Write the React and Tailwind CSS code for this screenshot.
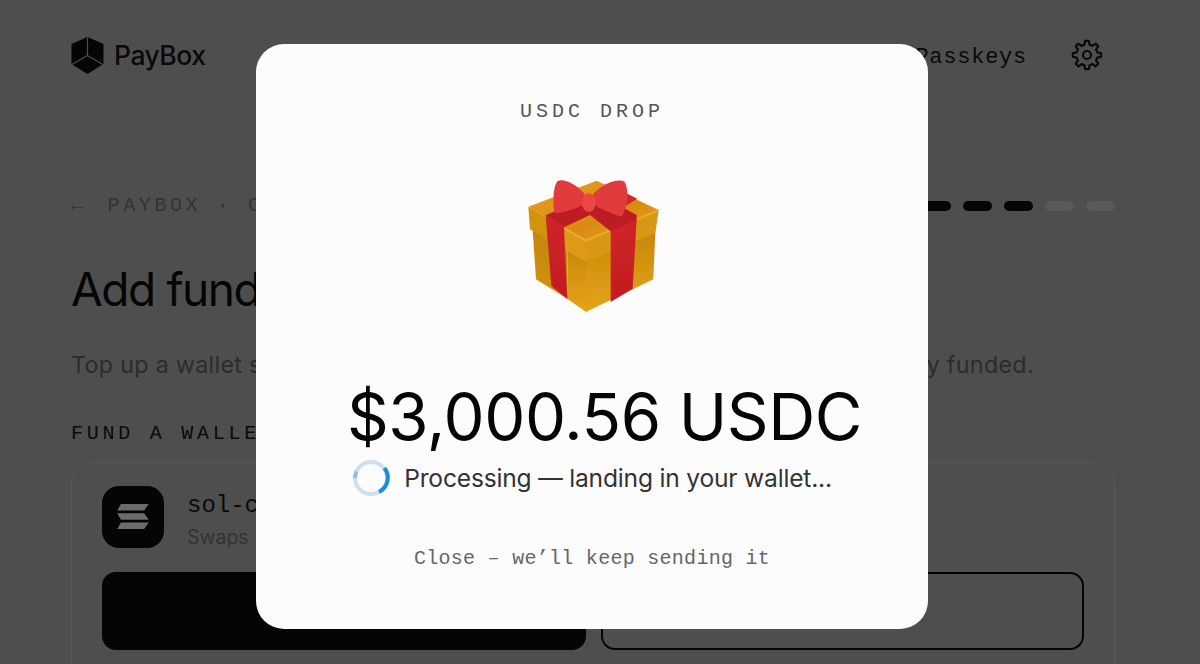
import React from "react";

const sans = "font-['Inter','Liberation_Sans',sans-serif]";
const mono = "font-['Liberation_Mono','DejaVu_Sans_Mono',monospace]";

function Logo() {
  return (
    <svg width="33" height="37" viewBox="0 0 33 37" className="shrink-0">
      <path d="M16.5 0 L32.5 7 L32.5 27 L16.5 37 L0.5 27 L0.5 7 Z" fill="#050505" />
      <path d="M16.5 0.5 L16.5 18.5 M16.5 18.5 L1 27.5 M16.5 18.5 L32 27.5" stroke="#4e4e4e" strokeWidth="1.2" fill="none" />
    </svg>
  );
}

function gearPath() {
  const cx = 16, cy = 16, outer = 14.2, inner = 10.6, n = 8;
  const step = (Math.PI * 2) / n;
  let d = "";
  for (let i = 0; i < n; i++) {
    const a = i * step - Math.PI / 2;
    const pt = (r, t) => `${(cx + r * Math.cos(t)).toFixed(2)} ${(cy + r * Math.sin(t)).toFixed(2)}`;
    const w = step * 0.17, v = step * 0.3;
    d += `${i === 0 ? "M" : "L"} ${pt(inner, a - v)} `;
    d += `L ${pt(outer, a - w)} A ${outer} ${outer} 0 0 1 ${pt(outer, a + w)} L ${pt(inner, a + v)} `;
    d += `A ${inner} ${inner} 0 0 1 ${pt(inner, a + step - v)} `;
  }
  return d + "Z";
}

function Gear() {
  return (
    <svg width="32" height="32" viewBox="0 0 32 32" fill="none" stroke="#0a0a0a" strokeWidth="2.2" strokeLinecap="round" strokeLinejoin="round">
      <path d={gearPath()} />
      <circle cx="16" cy="16" r="4" />
    </svg>
  );
}

function Solana() {
  return (
    <svg width="32" height="26" viewBox="0 0 34 28" fill="#6b6b6b">
      <path d="M4 0 H34 L29 7 H0 Z" />
      <path d="M0 10 H29 L34 17 H4 Z" />
      <path d="M4 20 H34 L29 27 H0 Z" />
    </svg>
  );
}

function Gift() {
  return (
    <svg width="220" height="190" viewBox="0 0 660 570" className="-ml-[4px] shrink-0">
      <defs>
        <linearGradient id="lidTop" x1="0" y1="0" x2="1" y2="1">
          <stop offset="0" stopColor="#e5a324" />
          <stop offset="0.6" stopColor="#d98a14" />
          <stop offset="1" stopColor="#eda71f" />
        </linearGradient>
        <linearGradient id="frontFace" x1="0" y1="0" x2="0" y2="1">
          <stop offset="0" stopColor="#c6860e" />
          <stop offset="0.35" stopColor="#d3920f" />
          <stop offset="1" stopColor="#e5a31a" />
        </linearGradient>
        <linearGradient id="sideFace" x1="0" y1="0" x2="0" y2="1">
          <stop offset="0" stopColor="#c4860e" />
          <stop offset="1" stopColor="#d2930f" />
        </linearGradient>
        <linearGradient id="ribbon" x1="0" y1="0" x2="0" y2="1">
          <stop offset="0" stopColor="#cf2228" />
          <stop offset="1" stopColor="#c21e22" />
        </linearGradient>
        <filter id="soft"><feGaussianBlur stdDeviation="1.8" /></filter>
      </defs>
      <g filter="url(#soft)">
        <path d="M158 240 L262 300 L264 448 L168 388 Z" fill="url(#sideFace)" />
        <path d="M262 296 L318 330 L318 486 L264 448 Z" fill="url(#frontFace)" />
        <path d="M318 330 L526 245 L520 388 L318 486 Z" fill="url(#frontFace)" />
        <path d="M145 170 L350 92 L536 180 L318 270 Z" fill="url(#lidTop)" />
        <path d="M145 170 L252 232 L252 298 L150 238 Z" fill="#d39411" />
        <path d="M252 232 L318 270 L318 335 L252 298 Z" fill="#dd9a16" />
        <path d="M318 270 L536 180 L526 250 L318 335 Z" fill="#d99716" />
        <path d="M252 232 L318 268 L536 178 L536 184 L318 275 L252 238 Z" fill="#e8ab2c" />
        <path d="M197 196 L252 232 L262 447 L214 408 Z" fill="url(#ribbon)" />
        <path d="M392 242 L470 208 L458 416 L392 456 Z" fill="url(#ribbon)" />
        <path d="M197 196 L350 130 L470 195 L470 210 L392 244 L330 195 L252 232 Z" fill="#bd1e20" />
        <path d="M436 128 L472 146 L440 166 L410 150 Z" fill="#cf2829" />
        <path d="M312 130 C285 100 248 84 232 94 C218 112 218 165 224 190 C262 186 302 172 318 158 Z" fill="#e23a3c" />
        <path d="M342 130 C365 104 412 82 434 96 C448 120 444 172 424 200 C394 190 354 174 334 158 Z" fill="#e23a3c" />
        <ellipse cx="326" cy="158" rx="21" ry="28" fill="#ea4645" />
      </g>
    </svg>
  );
}

function Spinner() {
  return (
    <svg width="38" height="38" viewBox="0 0 38 38" fill="none" className="shrink-0">
      <circle cx="19" cy="19" r="16" stroke="#cfdfee" strokeWidth="4" />
      <path d="M3 19 A16 16 0 0 1 4.5 12.5" stroke="#8fbde6" strokeWidth="4" />
      <path d="M32.5 9 A16 16 0 0 1 27 33" stroke="#1c8dd9" strokeWidth="4" />
    </svg>
  );
}

function Pill({ on }) {
  return <div className={`h-[10px] w-[29px] rounded-full ${on ? "bg-[#050505]" : "bg-[#595959]"}`} />;
}

export default function App() {
  return (
    <div className={`relative h-[664px] w-[1200px] overflow-hidden bg-[#4e4e4e] ${sans}`}>
      <div className="pt-[36px]">
        <div className="flex h-[38px] items-center justify-between pl-[71px] pr-[97px]">
          <div className="flex items-center gap-[10px]">
            <Logo />
            <span className="text-[26.5px] font-medium leading-[38px] tracking-[-0.5px] text-[#0a0a0a]">PayBox</span>
          </div>
          <div className="flex items-center gap-[44px]">
            <span className={`${mono} mt-[6px] text-[22px] leading-[38px] tracking-[0.75px] text-[#0a0a0a]`}>Passkeys</span>
            <Gear />
          </div>
        </div>
      </div>

      <div className="flex items-center justify-between pl-[71px] pr-[85px] pt-[120px]">
        <span className={`${mono} flex text-[20px] leading-[24px] tracking-[3.6px] text-[#333333]`}>
          <span className="mr-[21px]">←</span>
          <span>PAYBOX · CHECKOUT</span>
        </span>
        <div className="flex gap-[12px]">
          <Pill on /><Pill on /><Pill on /><Pill on /><Pill /><Pill />
        </div>
      </div>

      <h1 className="pl-[71px] pt-[42px] text-[46px] font-normal leading-[58px] tracking-[-1.4px] text-[#050505]">Add funds</h1>

      <p className="whitespace-nowrap pl-[71px] pt-[29px] text-[23.3px] leading-[36px] tracking-[0.29px] text-[#2c2c2c]">
        Top up a wallet so your AI agents can keep paying for compute and stay fully funded.
      </p>

      <div className={`${mono} pl-[71px] pt-[38px] text-[20px] leading-[26px] tracking-[3.75px] text-[#0a0a0a]`}>FUND A WALLET</div>

      <div className="ml-[71px] mr-[85px] mt-[15px] h-[300px] rounded-[24px] border border-[#575757] px-[30px] pt-[20px]">
        <div className="flex items-center gap-[23px]">
          <div className="flex h-[62px] w-[62px] items-center justify-center rounded-[17px] bg-[#050505]">
            <Solana />
          </div>
          <div className="flex flex-col pt-[7px]">
            <span className={`${mono} text-[24px] leading-[32px] text-[#0a0a0a]`}>sol-checkout</span>
            <span className="pt-[1px] text-[19.5px] leading-[28px] text-[#333333]">Swaps</span>
          </div>
        </div>
        <div className="mt-[21px] grid grid-cols-2 gap-[15px]">
          <div className="h-[78px] rounded-[14px] bg-[#050505]" />
          <div className="h-[78px] rounded-[14px] border-2 border-[#050505]" />
        </div>
      </div>

      <div className="absolute left-[256px] top-[44px] flex h-[585px] w-[672px] flex-col items-center rounded-[28px] bg-[#fcfcfc]">
        <div className={`${mono} pt-[55px] text-[20px] leading-[26px] tracking-[4px] text-[#555555]`}>USDC DROP</div>
        <div className="mt-[25px]"><Gift /></div>
        <div className="ml-[25px] mt-[45px] text-[65.2px] font-normal leading-[64px] tracking-[-0.4px] text-[#050505]">$3,000.56 USDC</div>
        <div className="mt-[10px] flex items-center gap-[14px]">
          <Spinner />
          <span className="text-[24.6px] leading-[36px] tracking-[-0.2px] text-[#333333]">Processing — landing in your wallet...</span>
        </div>
        <div className={`${mono} mt-[48px] text-[20px] leading-[28px] tracking-[0.28px] text-[#666666]`}>Close – we’ll keep sending it</div>
      </div>
    </div>
  );
}
